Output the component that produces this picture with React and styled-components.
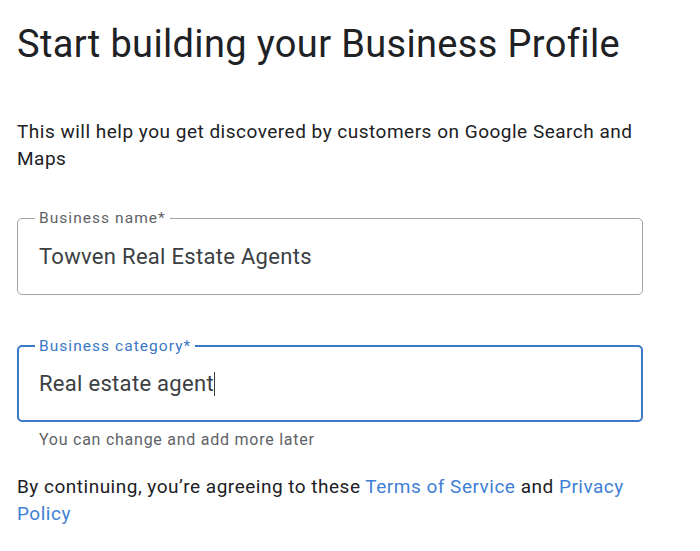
import React from "react";
import styled, { createGlobalStyle } from "styled-components";

const Global = createGlobalStyle`
  html, body { margin: 0; padding: 0; background: #ffffff; }
  body { font-family: Roboto, "Noto Sans", Arial, sans-serif; color: #202124; }
`;

const Page = styled.div`
  width: 700px;
  height: 551px;
  box-sizing: border-box;
  padding: 21px 57px 0 17px;
  display: flex;
  flex-direction: column;
`;

const Title = styled.h1`
  margin: 0;
  font-size: 38px;
  line-height: 46px;
  font-weight: 400;
  color: #202124;
  letter-spacing: 0.35px;
`;

const Intro = styled.p`
  margin: 51px 0 0;
  font-size: 19px;
  line-height: 27px;
  letter-spacing: 0.5px;
  color: #202124;
`;

const Field = styled.div`
  position: relative;
  margin-top: ${(p) => p.$mt}px;
  height: 77px;
  box-sizing: border-box;
  border: ${(p) => (p.$focused ? "2px solid #3b78c6" : "1px solid #a3a3a3")};
  border-radius: 5px;
  padding: ${(p) => (p.$focused ? "24px 20px 0" : "25px 21px 0")};
  display: flex;
  flex-direction: column;
`;

const Label = styled.span`
  position: absolute;
  top: -10px;
  left: ${(p) => (p.$focused ? 16 : 17)}px;
  padding: 0 4px;
  background: #ffffff;
  font-size: 15.5px;
  line-height: 18px;
  letter-spacing: 1.05px;
  color: ${(p) => (p.$focused ? "#3b78c6" : "#5f6368")};
`;

const Value = styled.div`
  font-size: 22px;
  line-height: 26px;
  letter-spacing: 0.3px;
  color: #3c4043;
  display: flex;
  align-items: center;
`;

const Caret = styled.span`
  display: inline-block;
  width: 1.5px;
  height: 24px;
  background: #3c4043;
`;

const Helper = styled.div`
  margin: 8px 0 0 22px;
  font-size: 16px;
  line-height: 20px;
  letter-spacing: 0.75px;
  color: #5f6368;
`;

const Footer = styled.p`
  margin: 23px 0 0;
  font-size: 19px;
  line-height: 27px;
  letter-spacing: 0.5px;
  color: #202124;
`;

const Link = styled.a`
  color: #4180d4;
  text-decoration: none;
`;

export default function App() {
  return (
    <>
      <Global />
      <Page>
        <Title>Start building your Business Profile</Title>
        <Intro>
          This will help you get discovered by customers on Google Search and
          Maps
        </Intro>
        <Field $mt={46}>
          <Label>Business name*</Label>
          <Value>Towven Real Estate Agents</Value>
        </Field>
        <Field $mt={50} $focused>
          <Label $focused>Business category*</Label>
          <Value>
            Real estate agent
            <Caret />
          </Value>
        </Field>
        <Helper>You can change and add more later</Helper>
        <Footer>
          By continuing, you’re agreeing to these <Link href="#">Terms of Service</Link> and{" "}
          <Link href="#">Privacy Policy</Link>
        </Footer>
      </Page>
    </>
  );
}
